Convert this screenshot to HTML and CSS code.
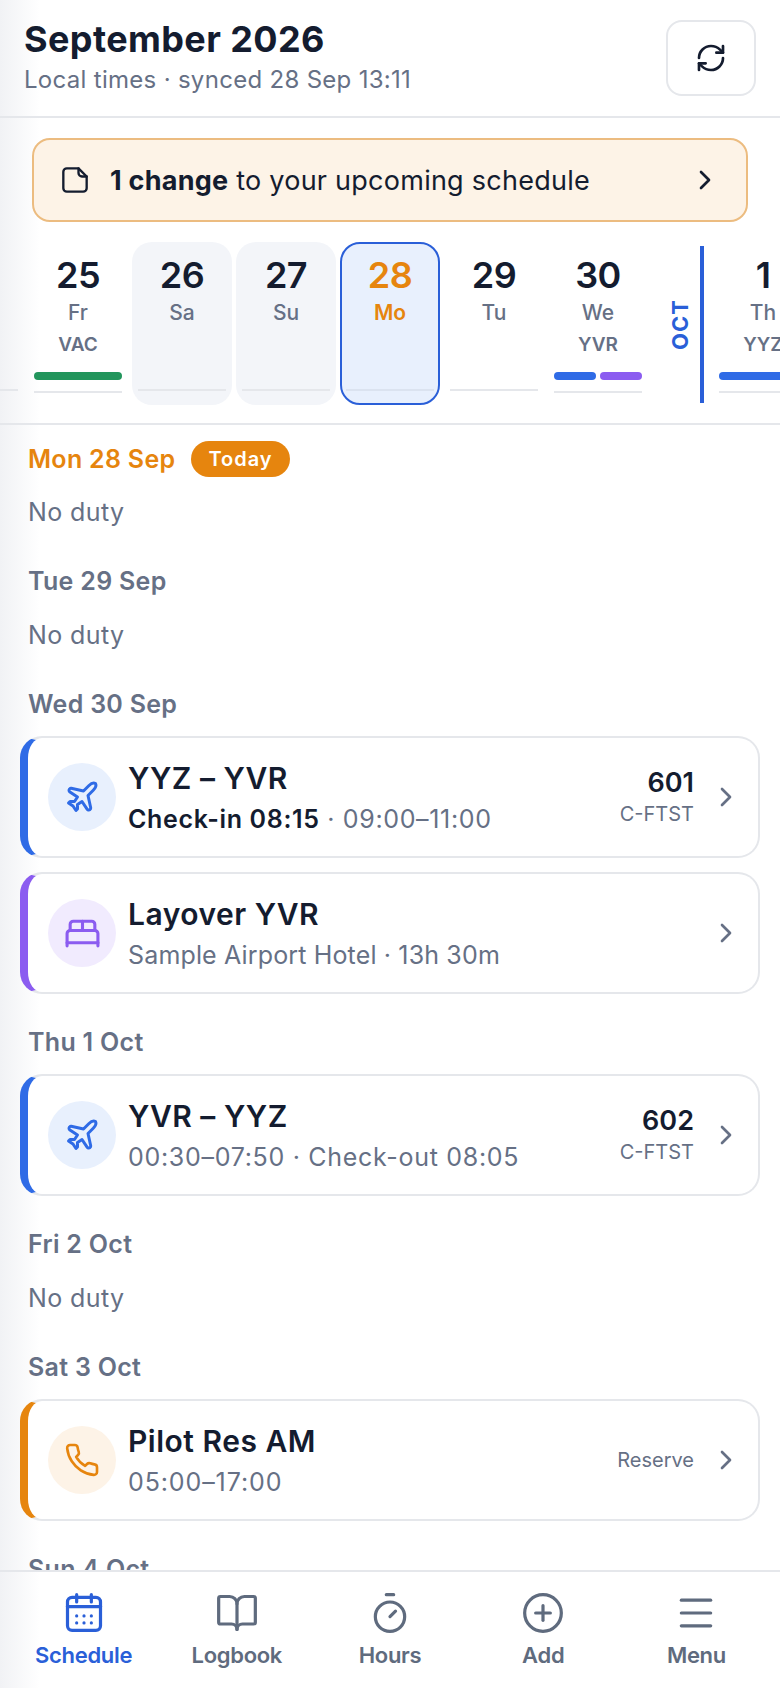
FILE: index.html
```html
<!DOCTYPE html>
<html lang="en">
<head>
    <meta charset="UTF-8">
    <meta name="viewport" content="width=device-width, initial-scale=1.0">
    <title>Schedule</title>
    <link rel="stylesheet" href="styles.css">
</head>
<body>
    <div class="app">
        <header class="top-bar">
            <div>
                <h1 class="month-title">September 2026</h1>
                <p class="sync-note">Local times · synced 28 Sep 13:11</p>
            </div>
            <button class="refresh-btn" aria-label="Refresh">
                <svg class="icon" width="32" height="32" viewBox="0 0 24 24"><path d="M3 12a9 9 0 0 1 9-9 9.75 9.75 0 0 1 6.74 2.74L21 8"/><path d="M21 3v5h-5"/><path d="M21 12a9 9 0 0 1-9 9 9.75 9.75 0 0 1-6.74-2.74L3 16"/><path d="M8 16H3v5"/></svg>
            </button>
        </header>

        <a class="change-banner" href="#changes">
            <svg class="icon" width="28" height="28" viewBox="0 0 24 24"><path d="M15 2H5a3 3 0 0 0-3 3v14a3 3 0 0 0 3 3h14a3 3 0 0 0 3-3V9z"/><path d="M15 2v4a3 3 0 0 0 3 3h4"/></svg>
            <span class="change-text"><strong>1 change</strong> to your upcoming schedule</span>
            <svg class="icon" width="32" height="32" viewBox="0 0 24 24"><path d="m9 18 6-6-6-6"/></svg>
        </a>

        <div class="day-strip">
            <div class="day-cell"><span class="day-rule"></span></div>
            <div class="day-cell duty">
                <span class="day-num">25</span><span class="day-name">Fr</span><span class="day-code">VAC</span>
                <span class="day-bars"><i class="green"></i></span>
                <span class="day-rule"></span>
            </div>
            <div class="day-cell weekend">
                <span class="day-num">26</span><span class="day-name">Sa</span>
                <span class="day-rule"></span>
            </div>
            <div class="day-cell weekend">
                <span class="day-num">27</span><span class="day-name">Su</span>
                <span class="day-rule"></span>
            </div>
            <div class="day-cell today">
                <span class="day-num">28</span><span class="day-name">Mo</span>
                <span class="day-rule"></span>
            </div>
            <div class="day-cell">
                <span class="day-num">29</span><span class="day-name">Tu</span>
                <span class="day-rule"></span>
            </div>
            <div class="day-cell duty">
                <span class="day-num">30</span><span class="day-name">We</span><span class="day-code">YVR</span>
                <span class="day-bars"><i class="blue"></i><i class="purple"></i></span>
                <span class="day-rule"></span>
            </div>
            <div class="month-break"><span class="month-label">OCT</span></div>
            <div class="day-cell duty">
                <span class="day-num">1</span><span class="day-name">Th</span><span class="day-code">YYZ</span>
                <span class="day-bars"><i class="blue"></i></span>
                <span class="day-rule"></span>
            </div>
        </div>

        <main class="agenda">
            <section class="day no-duty">
                <h2 class="day-title today-title">Mon 28 Sep <span class="today-pill">Today</span></h2>
                <p class="empty-note">No duty</p>
            </section>

            <section class="day no-duty">
                <h2 class="day-title">Tue 29 Sep</h2>
                <p class="empty-note">No duty</p>
            </section>

            <section class="day">
                <h2 class="day-title">Wed 30 Sep</h2>
                <a class="duty-card flight" href="#601">
                    <span class="duty-icon">
                        <svg class="icon" width="36" height="36" viewBox="0 0 24 24"><path d="M17.8 19.2 16 11l3.5-3.5C21 6 21.5 4 21 3c-1-.5-3 0-4.5 1.5L13 8 4.8 6.2c-.5-.1-.9.1-1.1.5l-.3.5c-.2.5-.1 1 .3 1.3L9 12l-2 3H4l-1 1 3 2 2 3 1-1v-3l3-2 3.5 5.3c.3.4.8.5 1.3.3l.5-.2c.4-.3.6-.7.5-1.2z"/></svg>
                    </span>
                    <span class="duty-main">
                        <span class="duty-title">YYZ – YVR</span>
                        <span class="duty-sub checkin"><b>Check-in 08:15</b> · 09:00–11:00</span>
                    </span>
                    <span class="duty-side">
                        <span class="flight-no">601</span>
                        <span class="tail-no">C-FTST</span>
                    </span>
                    <svg class="icon chevron" width="32" height="32" viewBox="0 0 24 24"><path d="m9 18 6-6-6-6"/></svg>
                </a>
                <a class="duty-card layover" href="#layover">
                    <span class="duty-icon">
                        <svg class="icon" width="37" height="37" viewBox="0 0 24 24"><path d="M2 20v-8a2 2 0 0 1 2-2h16a2 2 0 0 1 2 2v8"/><path d="M4 10V6a2 2 0 0 1 2-2h12a2 2 0 0 1 2 2v4"/><path d="M12 4v6"/><path d="M2 18h20"/></svg>
                    </span>
                    <span class="duty-main">
                        <span class="duty-title">Layover YVR</span>
                        <span class="duty-sub">Sample Airport Hotel · 13h 30m</span>
                    </span>
                    <svg class="icon chevron" width="32" height="32" viewBox="0 0 24 24"><path d="m9 18 6-6-6-6"/></svg>
                </a>
            </section>

            <section class="day">
                <h2 class="day-title">Thu 1 Oct</h2>
                <a class="duty-card flight" href="#602">
                    <span class="duty-icon">
                        <svg class="icon" width="36" height="36" viewBox="0 0 24 24"><path d="M17.8 19.2 16 11l3.5-3.5C21 6 21.5 4 21 3c-1-.5-3 0-4.5 1.5L13 8 4.8 6.2c-.5-.1-.9.1-1.1.5l-.3.5c-.2.5-.1 1 .3 1.3L9 12l-2 3H4l-1 1 3 2 2 3 1-1v-3l3-2 3.5 5.3c.3.4.8.5 1.3.3l.5-.2c.4-.3.6-.7.5-1.2z"/></svg>
                    </span>
                    <span class="duty-main">
                        <span class="duty-title">YVR – YYZ</span>
                        <span class="duty-sub">00:30–07:50 · Check-out 08:05</span>
                    </span>
                    <span class="duty-side">
                        <span class="flight-no">602</span>
                        <span class="tail-no">C-FTST</span>
                    </span>
                    <svg class="icon chevron" width="32" height="32" viewBox="0 0 24 24"><path d="m9 18 6-6-6-6"/></svg>
                </a>
            </section>

            <section class="day no-duty">
                <h2 class="day-title">Fri 2 Oct</h2>
                <p class="empty-note">No duty</p>
            </section>

            <section class="day">
                <h2 class="day-title">Sat 3 Oct</h2>
                <a class="duty-card reserve" href="#reserve">
                    <span class="duty-icon">
                        <svg class="icon" width="36" height="36" viewBox="0 0 24 24"><path d="M22 16.92v3a2 2 0 0 1-2.18 2 19.79 19.79 0 0 1-8.63-3.07 19.5 19.5 0 0 1-6-6 19.79 19.79 0 0 1-3.07-8.67A2 2 0 0 1 4.11 2h3a2 2 0 0 1 2 1.72c.13.96.36 1.9.7 2.81a2 2 0 0 1-.45 2.11L8.09 9.91a16 16 0 0 0 6 6l1.27-1.27a2 2 0 0 1 2.11-.45c.91.34 1.85.57 2.81.7A2 2 0 0 1 22 16.92z"/></svg>
                    </span>
                    <span class="duty-main">
                        <span class="duty-title">Pilot Res AM</span>
                        <span class="duty-sub">05:00–17:00</span>
                    </span>
                    <span class="duty-side">
                        <span class="reserve-tag">Reserve</span>
                    </span>
                    <svg class="icon chevron" width="32" height="32" viewBox="0 0 24 24"><path d="m9 18 6-6-6-6"/></svg>
                </a>
            </section>

            <section class="day">
                <h2 class="day-title">Sun 4 Oct</h2>
            </section>
        </main>

        <nav class="tab-bar">
            <a class="tab active" href="#schedule">
                <svg class="icon" width="44" height="44" viewBox="0 0 24 24"><rect x="3" y="3.5" width="18" height="18" rx="2.5"/><path d="M8 2v4"/><path d="M16 2v4"/><path d="M3 8.5h18"/><path d="M8 13.6h.01M12 13.6h.01M16 13.6h.01M8 17.4h.01M12 17.4h.01M16 17.4h.01"/></svg>
                <span>Schedule</span>
            </a>
            <a class="tab" href="#logbook">
                <svg class="icon" width="44" height="44" viewBox="0 0 24 24"><path d="M12 7v14"/><path d="M3 18a1 1 0 0 1-1-1V4a1 1 0 0 1 1-1h5a4 4 0 0 1 4 4 4 4 0 0 1 4-4h5a1 1 0 0 1 1 1v13a1 1 0 0 1-1 1h-6a3 3 0 0 0-3 3 3 3 0 0 0-3-3z"/></svg>
                <span>Logbook</span>
            </a>
            <a class="tab" href="#hours">
                <svg class="icon" width="44" height="44" viewBox="0 0 24 24"><path d="M10 2h4"/><path d="m12 14 3-3"/><circle cx="12" cy="14" r="8"/></svg>
                <span>Hours</span>
            </a>
            <a class="tab" href="#add">
                <svg class="icon" width="44" height="44" viewBox="0 0 24 24"><circle cx="12" cy="12" r="10"/><path d="M8 12h8"/><path d="M12 8v8"/></svg>
                <span>Add</span>
            </a>
            <a class="tab" href="#menu">
                <svg class="icon" width="44" height="44" viewBox="0 0 24 24"><path d="M4 5h16"/><path d="M4 12h16"/><path d="M4 19h16"/></svg>
                <span>Menu</span>
            </a>
        </nav>
    </div>
</body>
</html>
```

FILE: styles.css
```css
* {
    box-sizing: border-box;
}

body {
    margin: 0;
    font-family: Inter, "Noto Sans", sans-serif;
    color: #141c2f;
    background-color: #fff;
}

a {
    color: inherit;
    text-decoration: none;
}

.icon {
    fill: none;
    stroke: currentColor;
    stroke-width: 2;
    stroke-linecap: round;
    stroke-linejoin: round;
    flex-shrink: 0;
}

.app {
    width: 780px;
    height: 1688px;
    overflow: hidden;
    display: flex;
    flex-direction: column;
    background: linear-gradient(90deg, #f1f2f5 0, #fff 40px);
}

/* header */
.top-bar {
    height: 118px;
    flex-shrink: 0;
    display: flex;
    justify-content: space-between;
    padding: 20px 24px 0;
    border-bottom: 2px solid #e5e7eb;
}

.month-title {
    margin: 0;
    font-size: 36px;
    line-height: 38px;
    font-weight: 700;
    letter-spacing: 0.4px;
}

.sync-note {
    margin: 6px 0 0;
    font-size: 24px;
    line-height: 32px;
    color: #667085;
    letter-spacing: 0.3px;
}

.refresh-btn {
    width: 90px;
    height: 76px;
    display: flex;
    align-items: center;
    justify-content: center;
    background: #fff;
    color: #141c2f;
    border: 2px solid #e5e7eb;
    border-radius: 16px;
}

/* change banner */
.change-banner {
    height: 84px;
    margin: 20px 32px 0;
    padding: 0 25px 0 27px;
    flex-shrink: 0;
    display: flex;
    align-items: center;
    background: #fdf3e7;
    border: 2px solid #ecbc80;
    border-radius: 18px;
}

.change-text {
    flex: 1;
    margin-left: 21px;
    font-size: 27px;
    letter-spacing: 0.25px;
}

.change-text strong {
    font-weight: 700;
}

/* day strip */
.day-strip {
    height: 203px;
    flex-shrink: 0;
    display: flex;
    gap: 4px;
    margin-left: -76px;
    padding-top: 20px;
    border-bottom: 2px solid #e5e7eb;
}

.day-cell {
    position: relative;
    width: 100px;
    height: 163px;
    flex-shrink: 0;
    display: flex;
    flex-direction: column;
    align-items: center;
    padding-top: 13px;
    border-radius: 20px;
}

.day-num {
    font-size: 36px;
    line-height: 40px;
    font-weight: 600;
    letter-spacing: -0.5px;
}

.day-name {
    margin-top: 5px;
    font-size: 21px;
    line-height: 26px;
    font-weight: 500;
    color: #667085;
}

.day-code {
    margin-top: 7px;
    font-size: 19px;
    line-height: 24px;
    font-weight: 600;
    color: #667085;
}

.day-bars {
    width: 88px;
    height: 8px;
    margin-top: 15px;
    display: flex;
    gap: 4px;
}

.day-bars i {
    flex: 1;
    border-radius: 4px;
}

.day-bars .green { background: #22955c; }
.day-bars .blue { background: #2f6be6; }
.day-bars .purple { background: #8b5cf0; }

.day-rule {
    position: absolute;
    left: 6px;
    right: 6px;
    bottom: 14px;
    height: 2px;
    background: #e5e7eb;
}

.day-cell.duty .day-rule {
    bottom: 12px;
}

.day-cell.weekend {
    background: #f3f5f9;
}

.day-cell.today {
    background: #e8f0fd;
    border: 2px solid #2a5fd8;
    padding-top: 11px;
}

.day-cell.today .day-rule {
    left: 4px;
    right: 4px;
    bottom: 12px;
    background: #dbe3f0;
}

.day-cell.today .day-num,
.day-cell.today .day-name {
    color: #e6850e;
}

.day-cell.today .day-name {
    font-weight: 600;
}

.month-break {
    width: 57px;
    height: 157px;
    margin-top: 4px;
    flex-shrink: 0;
    display: flex;
    justify-content: flex-end;
    align-items: center;
    padding-right: 5px;
}

.month-break::after {
    content: "";
    width: 4px;
    height: 157px;
    margin-left: 8px;
    background: #2a5fd8;
}

.month-label {
    writing-mode: vertical-rl;
    transform: rotate(180deg);
    font-size: 22px;
    line-height: 24px;
    font-weight: 700;
    letter-spacing: 1px;
    color: #2a5fd8;
}

/* agenda list */
.agenda {
    flex: 1;
    min-height: 0;
    overflow: hidden;
    padding: 16px 20px 0 20px;
}

.day {
    margin-bottom: 32px;
}

.day.no-duty {
    margin-bottom: 37px;
}

.day-title {
    margin: 0 0 16px 8px;
    min-height: 32px;
    display: flex;
    align-items: center;
    font-size: 25px;
    line-height: 32px;
    font-weight: 600;
    color: #667085;
    letter-spacing: 0.3px;
}

.no-duty .day-title {
    margin-bottom: 22px;
}

.no-duty .today-title {
    margin-bottom: 19px;
    color: #e6850e;
}

.today-pill {
    margin-left: 16px;
    height: 36px;
    padding: 0 17px;
    display: inline-flex;
    align-items: center;
    font-size: 20px;
    color: #fff;
    background: #e6850e;
    border-radius: 18px;
    letter-spacing: 1px;
}

.empty-note {
    margin: 0 0 0 8px;
    font-size: 25px;
    line-height: 32px;
    color: #667085;
    letter-spacing: 0.4px;
}

.duty-card {
    height: 122px;
    display: flex;
    align-items: center;
    padding: 0 16px 0 20px;
    background: #fff;
    border: 2px solid #e5e7eb;
    border-left: 8px solid #2f6be6;
    border-radius: 22px;
}

.duty-card + .duty-card {
    margin-top: 14px;
}

.duty-card.layover { border-left-color: #8b5cf0; }
.duty-card.reserve { border-left-color: #e6850e; }

.duty-icon {
    width: 68px;
    height: 68px;
    flex-shrink: 0;
    display: flex;
    align-items: center;
    justify-content: center;
    border-radius: 50%;
    color: #2f6be6;
    background: #e8f0fd;
}

.layover .duty-icon {
    color: #8b5cf0;
    background: #f1ebfe;
}

.reserve .duty-icon {
    color: #e6850e;
    background: #fdf3e7;
}

.reserve .duty-icon .icon,
.tab .icon {
    stroke-width: 1.75;
}

.duty-main {
    flex: 1;
    margin-left: 12px;
    display: flex;
    flex-direction: column;
}

.duty-title {
    font-size: 30px;
    line-height: 36px;
    font-weight: 600;
    letter-spacing: 0.5px;
}

.duty-sub {
    margin-top: 7px;
    font-size: 25px;
    line-height: 32px;
    color: #667085;
    letter-spacing: 0.7px;
}

.duty-sub.checkin {
    letter-spacing: 0.65px;
}

.layover .duty-sub {
    letter-spacing: 0.15px;
}

.reserve .duty-sub {
    letter-spacing: 0.9px;
}

.duty-sub b {
    font-weight: 600;
    color: #141c2f;
}

.duty-side {
    display: flex;
    flex-direction: column;
    align-items: flex-end;
}

.flight-no {
    font-size: 27px;
    line-height: 32px;
    font-weight: 600;
}

.tail-no {
    margin-top: 1px;
    font-size: 20px;
    line-height: 28px;
    color: #667085;
}

.reserve-tag {
    font-size: 20px;
    line-height: 28px;
    color: #667085;
}

.chevron {
    margin-left: 16px;
    color: #667085;
}

/* bottom tabs */
.tab-bar {
    height: 118px;
    flex-shrink: 0;
    display: flex;
    padding: 0 7px;
    border-top: 2px solid #e5e7eb;
    background: linear-gradient(90deg, #f1f2f5 0, #fff 40px);
}

.tab {
    flex: 1;
    display: flex;
    flex-direction: column;
    align-items: center;
    padding-top: 19px;
    color: #5f6b7e;
    font-size: 22px;
    line-height: 28px;
    font-weight: 600;
    letter-spacing: -0.3px;
}

.tab span {
    margin-top: 6px;
}

.tab.active {
    color: #2a5fd8;
}
```
